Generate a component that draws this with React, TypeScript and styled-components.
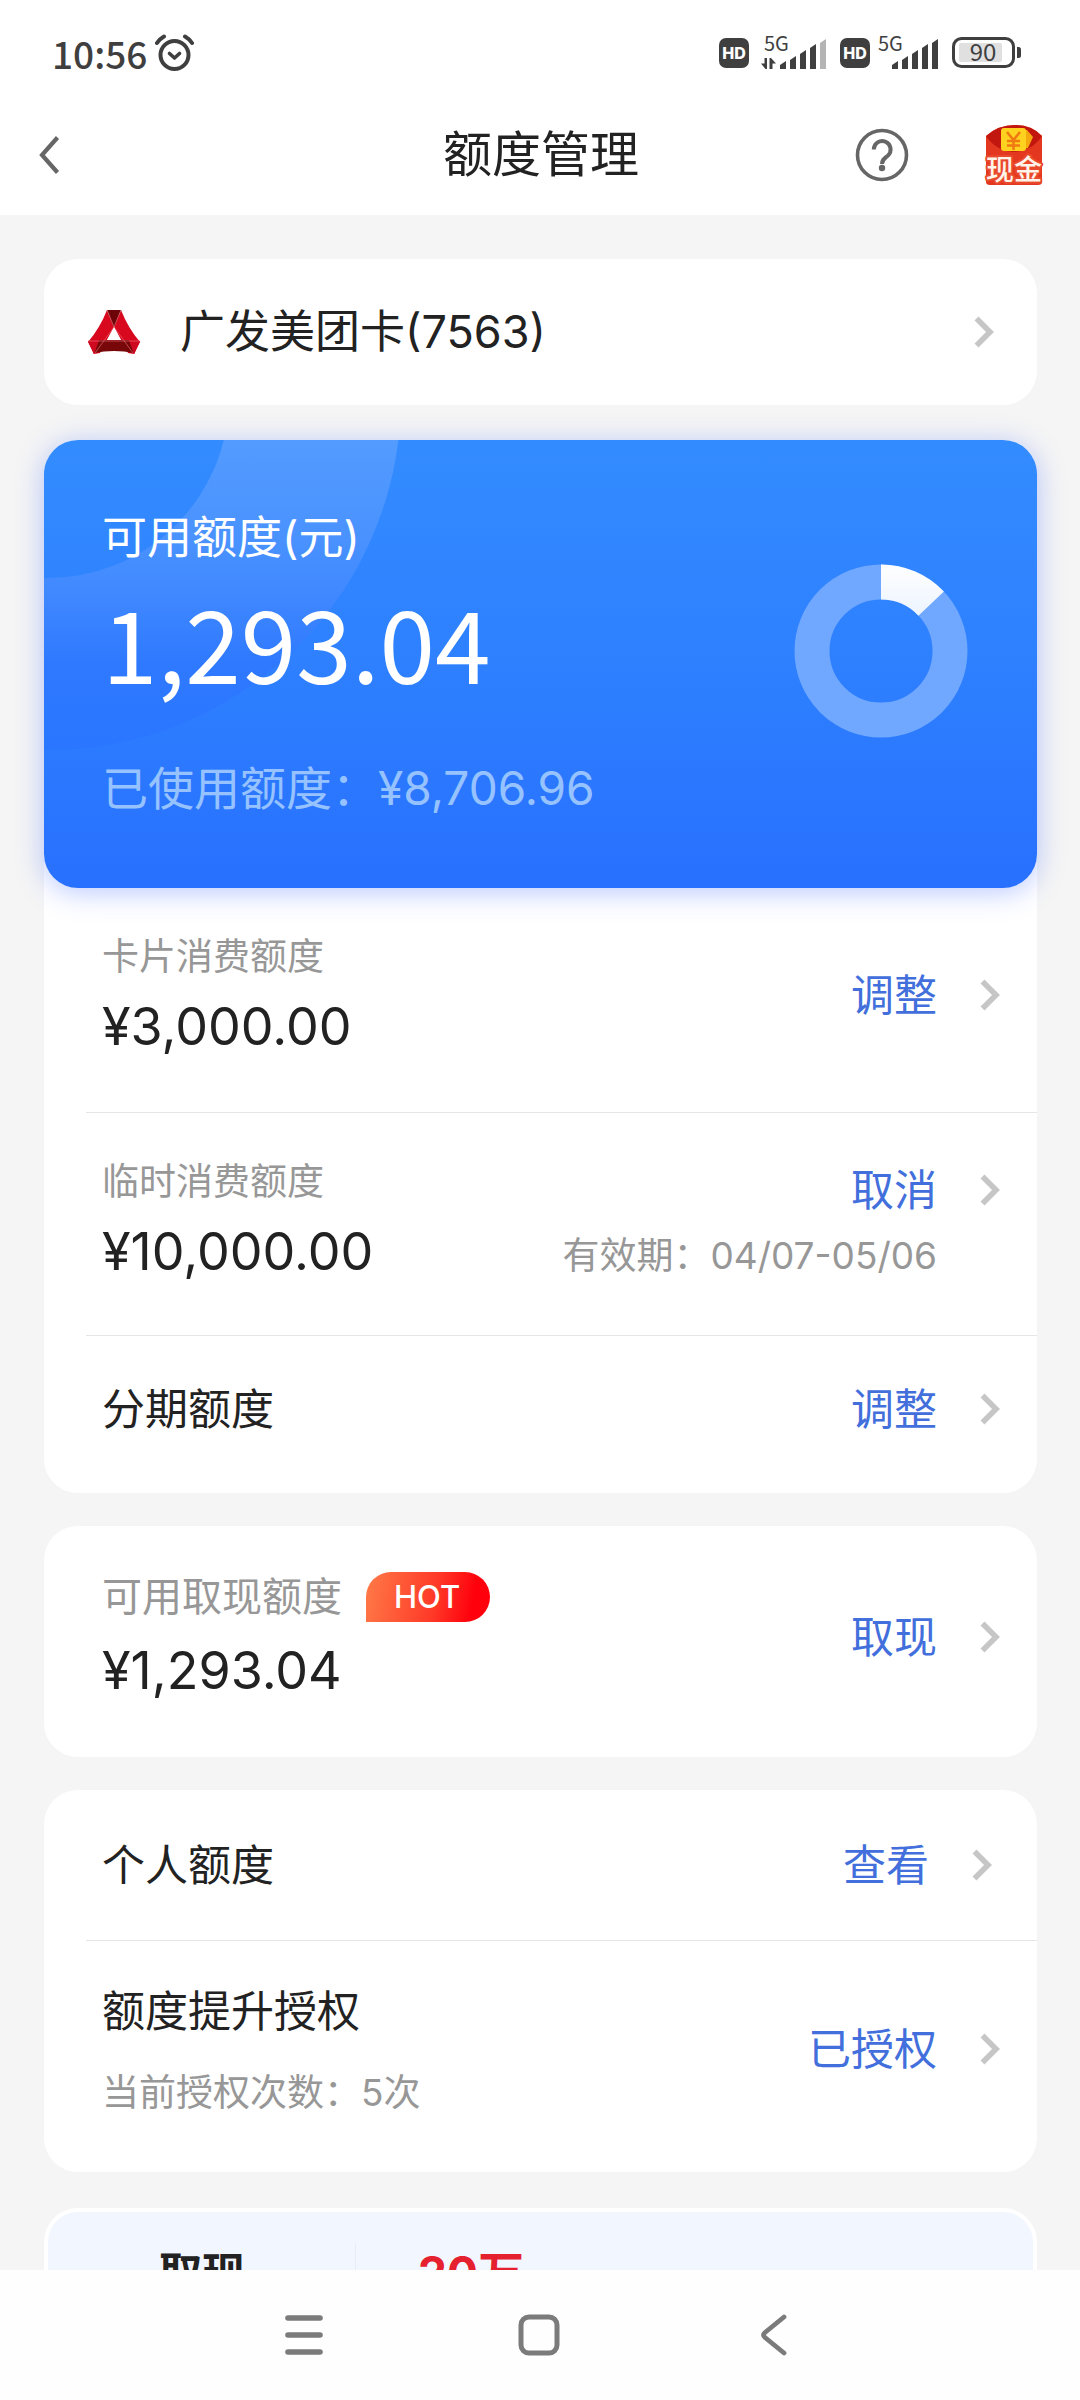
import React from 'react';
import styled, { createGlobalStyle, css } from 'styled-components';

const latinFirst = `Inter, "Noto Sans CJK SC", sans-serif`;
const cjkFirst = `"Noto Sans CJK SC", sans-serif`;

const color = {
  ink: '#222222',
  muted: '#979797',
  status: '#3f3f3f',
  icon: '#666666',
  link: '#426fdc',
  page: '#f5f5f5',
  line: '#e6e6e6',
  chevron: '#c6c6c6',
};

const GlobalStyle = createGlobalStyle`
  *, *::before, *::after { box-sizing: border-box; }
  body { margin: 0; background: #ffffff; font-family: ${latinFirst}; color: ${color.ink}; }
  h1, h2, p, dl, dd, dt { margin: 0; font-weight: 400; }
  svg { display: block; flex: none; }
`;

const Screen = styled.div`
  height: 100vh;
  display: flex;
  flex-direction: column;
  background: #ffffff;
`;

const StatusBar = styled.header`
  flex: none;
  display: flex;
  align-items: center;
  justify-content: space-between;
  padding: 31px 59px 13px 52px;
`;

const StatusGroup = styled.div<{ $gap: number }>`
  display: flex;
  align-items: center;
  gap: ${(p) => p.$gap}px;
`;

const Clock = styled.span`
  font-family: ${cjkFirst};
  font-size: 37px;
  line-height: 44px;
  font-weight: 500;
  color: ${color.status};
`;

const HdBadge = styled.span`
  width: 30px;
  height: 30px;
  border-radius: 7px;
  background: ${color.status};
  color: #ffffff;
  font-size: 16px;
  line-height: 30px;
  font-weight: 800;
  text-align: center;
`;

const TitleBar = styled.nav`
  flex: none;
  display: grid;
  grid-template-columns: 1fr auto 1fr;
  align-items: center;
  padding: 32px 36px 25px 38px;
`;

const Title = styled.h1`
  font-size: 49px;
  line-height: 70px;
`;

const TitleActions = styled.div`
  display: flex;
  align-items: center;
  justify-content: flex-end;
  gap: 75px;
`;

const IconButton = styled.button`
  display: flex;
  justify-self: start;
  padding: 0;
  border: 0;
  background: none;
  cursor: pointer;
`;

const Content = styled.main`
  flex: 1;
  min-height: 0;
  overflow-y: auto;
  scrollbar-width: none;
  padding: 44px 43px 33px 44px;
  background: ${color.page};
`;

const Card = styled.section`
  border-radius: 34px;
  background: #ffffff;
  margin-bottom: 33px;
`;

const CardPicker = styled.button`
  display: flex;
  align-items: center;
  gap: 40px;
  width: 100%;
  margin-bottom: 35px;
  padding: 43px 43px 43px 44px;
  border: 0;
  border-radius: 34px;
  background: #ffffff;
  color: ${color.ink};
  font-family: inherit;
  font-size: 45px;
  line-height: 60px;
  text-align: left;
  cursor: pointer;
`;

const CardName = styled.span`
  flex: 1;
`;

const Summary = styled.div`
  position: relative;
  display: flex;
  justify-content: space-between;
  padding: 68px 69px 70px 58px;
  border-radius: 34px;
  background: linear-gradient(#338cff, #2e80ff 50%, #2870ff);
  box-shadow: 0 4px 28px rgba(50, 95, 255, 0.34);
  color: #ffffff;
`;

const Rings = styled.svg`
  position: absolute;
  left: 0;
  top: 0;
  border-top-left-radius: 34px;
`;

const SummaryText = styled.dl`
  position: relative;
`;

const SummaryLabel = styled.dt`
  font-size: 45px;
  line-height: 60px;
`;

const SummaryAmount = styled.dd`
  margin: 13px 0 57px;
  font-family: ${cjkFirst};
  font-size: 100px;
  line-height: 120px;
`;

const SummaryUsed = styled.dd`
  font-size: 46px;
  line-height: 60px;
  color: #96c3ff;
`;

const DonutBox = styled.div`
  margin-top: 56px;
`;

const Row = styled.div<{ $top: number; $bottom: number; $line?: boolean; $inset?: boolean }>`
  display: flex;
  align-items: center;
  justify-content: space-between;
  margin-left: 42px;
  padding: ${(p) => p.$top}px ${(p) => (p.$inset ? 45 : 37)}px ${(p) => p.$bottom}px 16px;
  ${(p) =>
    p.$line &&
    css`
      border-bottom: 1px solid ${color.line};
    `}
`;

const Stack = styled.div<{ $gap: number }>`
  display: flex;
  flex-direction: column;
  gap: ${(p) => p.$gap}px;
`;

const LabelLine = styled.div`
  display: flex;
  align-items: center;
  gap: 24px;
`;

const Label = styled.p<{ $large?: boolean }>`
  font-size: ${(p) => (p.$large ? 40 : 37)}px;
  line-height: 48px;
  color: ${color.muted};
`;

const Heading = styled.h2`
  font-size: 43px;
  line-height: 60px;
`;

const Amount = styled.p`
  font-size: 52px;
  line-height: 60px;
`;

const HotBadge = styled.span`
  padding: 0 30px 0 28px;
  border-radius: 25px 25px 25px 0;
  background: linear-gradient(100deg, #ff7a48, #ff3a28 55%, #ff000c 85%);
  color: #ffffff;
  font-size: 31px;
  line-height: 50px;
  font-weight: 500;
`;

const Action = styled.button`
  display: flex;
  align-items: center;
  justify-content: flex-end;
  gap: 43px;
  padding: 0;
  border: 0;
  background: none;
  color: ${color.link};
  font-family: inherit;
  font-size: 43px;
  line-height: 60px;
  cursor: pointer;
`;

const Validity = styled(Label)`
  padding-right: 63px;
  text-align: right;
`;

const Promo = styled.section`
  display: flex;
  align-items: center;
  margin-top: 36px;
  padding: 31px 111px;
  border: 4px solid #ffffff;
  border-radius: 34px;
  background: #f2f6ff;
  line-height: 60px;
`;

const PromoName = styled.h2`
  padding-right: 110px;
  border-right: 1px solid #e8ecf4;
  font-size: 43px;
  font-weight: 700;
`;

const PromoValue = styled.p`
  padding-left: 62px;
  font-size: 46px;
  font-weight: 700;
  color: #e5202f;
`;

const SystemNav = styled.nav`
  flex: none;
  display: flex;
  align-items: center;
  justify-content: center;
  gap: 194px;
  height: 130px;
  padding-right: 3px;
  background: #fefefe;
`;

function Chevron() {
  return (
    <svg width="20" height="32" viewBox="0 0 20 32" fill="none" aria-hidden="true">
      <path d="M2.5 2.5 16 16 2.5 29.5" stroke={color.chevron} strokeWidth="5.6" />
    </svg>
  );
}

function AlarmIcon() {
  return (
    <svg width="39" height="38" viewBox="0 0 39 38" fill="none" stroke={color.status} strokeLinecap="round" aria-hidden="true">
      <circle cx="19.5" cy="21" r="14" strokeWidth="4" />
      <path d="M14.5 19.5l5 4.5 5-4.5" strokeWidth="3.6" strokeLinejoin="round" />
      <path d="M2 9Q4.500 5 9 2.500M37 9Q34.500 5 30 2.500" strokeWidth="4" />
    </svg>
  );
}

function Signal({ bars, data }: { bars: number; data?: boolean }) {
  const shift = data ? 19 : 14;
  const tops = [30, 25, 19, 13, 8];
  return (
    <svg width={shift + 48} height="44" viewBox={`0 0 ${shift + 48} 44`} fill={color.status} aria-hidden="true">
      <text x={data ? 3 : 0} y="20" fontSize="20" fontFamily={cjkFirst} fontWeight="400">
        5G
      </text>
      {tops.map((top, i) => {
        const x = shift + i * 10;
        return (
          <path
            key={top}
            d={`M${x} ${top + 4}L${x + 6} ${top}V38H${x}Z`}
            fill={i < bars ? color.status : '#b4b4b4'}
          />
        );
      })}
      {data && <path d="M3.500 27H6V38H4.500L0 32.500H3.500ZM8.500 27H10L15 32.500H11.500V38H8.500Z" />}
    </svg>
  );
}

function Battery() {
  return (
    <svg width="69" height="40" viewBox="0 0 69 40" aria-hidden="true">
      <rect x="1.500" y="5.500" width="60" height="28" rx="8" fill="none" stroke={color.status} strokeWidth="3" />
      <rect x="7" y="10" width="43" height="19" rx="2" fill="#e0e0e0" />
      <path d="M65 14h1.500q2.500 0 2.500 2.500v6q0 2.500-2.500 2.500H65Z" fill={color.status} />
      <text x="31" y="28" textAnchor="middle" fontSize="24" fontFamily={cjkFirst} fontWeight="400" fill={color.status}>
        90
      </text>
    </svg>
  );
}

function BackIcon() {
  return (
    <svg width="22" height="40" viewBox="0 0 22 40" fill="none" aria-hidden="true">
      <path d="M19.500 2.500 4 20l15.500 17.500" stroke={color.icon} strokeWidth="4.200" />
    </svg>
  );
}

function HelpIcon() {
  return (
    <svg width="54" height="54" viewBox="0 0 54 54" fill="none" stroke={color.icon} aria-hidden="true">
      <circle cx="27" cy="27" r="24.500" strokeWidth="3.600" />
      <path d="M18.800 21.500a8.400 8.400 0 1 1 14 6.200c-3.600 3-5.800 4-5.800 8.300" strokeWidth="4" />
      <circle cx="27" cy="40" r="3.200" fill={color.icon} stroke="none" />
    </svg>
  );
}

function CashIcon() {
  return (
    <svg width="60" height="62" viewBox="0 0 60 62" aria-hidden="true">
      <path d="M2 12Q14 1 31 1T58 12V58Q58 61 54 61H6Q2 61 2 58Z" fill="#e3381f" />
      <path d="M2 12Q14 1 31 1T58 12Q48 27 30 28Q12 27 2 12Z" fill="#c1170f" />
      <path d="M34 6h9l6 7-5 11-8 2Z" fill="#f6a90f" />
      <rect x="17" y="4" width="25" height="23" rx="3" fill="#ffd21f" />
      <path d="M23 8l6.500 8L36 8M29.500 16v10M23 17h13M23 21.500h13" stroke="#f07a12" strokeWidth="2.600" fill="none" />
      <text
        x="30"
        y="56"
        textAnchor="middle"
        fontSize="28"
        fontWeight="500"
        fontFamily={cjkFirst}
        fill="#fff3ea"
        stroke="#ea4a2c"
        strokeWidth="4"
        strokeLinejoin="round"
        paintOrder="stroke"
      >
        现金
      </text>
    </svg>
  );
}

function BankLogo() {
  return (
    <svg width="52" height="44" viewBox="0 0 52 44" aria-hidden="true">
      <path d="M19 0 26 17 12 43 6 44 0 32Q12 18 19 0Z" fill="#d8081f" />
      <path d="M33 0 26 17 40 43 46 44 52 32Q40 18 33 0Z" fill="#d8081f" />
      <path d="M19 0H33L26 18Z" fill="#6d0508" />
      <path d="M0 31 12 30 6 44ZM52 31 40 30 46 44Z" fill="#cf0a20" />
      <path d="M11 30H41L46 43Q26 39 6 43Z" fill="#780709" />
      <path d="M0 31 11 30 6 44ZM52 31 41 30 46 44Z" fill="#cf0a20" />
      <path d="M26 17 33 30H19Z" fill="#ffffff" />
      <path d="M0 31H52M26 17 7 43M26 17 45 43M19 0l7 17 7-17" stroke="#f0737c" strokeWidth="0.600" fill="none" />
    </svg>
  );
}

function Donut({ ratio }: { ratio: number }) {
  const circumference = 2 * Math.PI * 69;
  return (
    <svg width="174" height="174" viewBox="0 0 174 174" fill="none" role="img" aria-label="可用额度占比">
      <defs>
        <linearGradient id="share" x1="0" y1="0" x2="0" y2="60" gradientUnits="userSpaceOnUse">
          <stop offset="0" stopColor="#ffffff" />
          <stop offset="1" stopColor="#e9f2ff" />
        </linearGradient>
      </defs>
      <circle cx="87" cy="87" r="69" stroke="#70a7ff" strokeWidth="35" />
      <path
        d="M87 18a69 69 0 0 1 0 138a69 69 0 0 1 0-138"
        stroke="url(#share)"
        strokeWidth="35"
        strokeDasharray={`${circumference * ratio} ${circumference}`}
      />
    </svg>
  );
}

function RingPattern() {
  return (
    <Rings width="360" height="320" viewBox="0 0 360 320" fill="none" aria-hidden="true">
      <defs>
        <linearGradient id="ring" x1="0" y1="0" x2="0" y2="310" gradientUnits="userSpaceOnUse">
          <stop offset="0" stopColor="#539bff" />
          <stop offset="0.300" stopColor="#4a93ff" />
          <stop offset="0.500" stopColor="#4088ff" />
          <stop offset="0.720" stopColor="#2e79ff" />
          <stop offset="1" stopColor="#2a76ff" />
        </linearGradient>
      </defs>
      <circle cx="4" cy="-43" r="267" stroke="url(#ring)" strokeWidth="172" />
    </Rings>
  );
}

function RowAction({ children }: { children: string }) {
  return (
    <Action type="button">
      {children}
      <Chevron />
    </Action>
  );
}

export default function App() {
  return (
    <Screen>
      <GlobalStyle />
      <StatusBar>
        <StatusGroup $gap={8}>
          <Clock>10:56</Clock>
          <AlarmIcon />
        </StatusGroup>
        <StatusGroup $gap={12}>
          <StatusGroup $gap={12}>
            <HdBadge>HD</HdBadge>
            <Signal bars={4} data />
          </StatusGroup>
          <StatusGroup $gap={8}>
            <HdBadge>HD</HdBadge>
            <Signal bars={5} />
          </StatusGroup>
          <Battery />
        </StatusGroup>
      </StatusBar>

      <TitleBar>
        <IconButton type="button" aria-label="返回">
          <BackIcon />
        </IconButton>
        <Title>额度管理</Title>
        <TitleActions>
          <IconButton type="button" aria-label="帮助">
            <HelpIcon />
          </IconButton>
          <IconButton type="button" aria-label="现金">
            <CashIcon />
          </IconButton>
        </TitleActions>
      </TitleBar>

      <Content>
        <CardPicker type="button">
          <BankLogo />
          <CardName>广发美团卡(7563)</CardName>
          <Chevron />
        </CardPicker>

        <Card>
          <Summary>
            <RingPattern />
            <SummaryText>
              <SummaryLabel>可用额度(元)</SummaryLabel>
              <SummaryAmount>1,293.04</SummaryAmount>
              <SummaryUsed>已使用额度：¥8,706.96</SummaryUsed>
            </SummaryText>
            <DonutBox>
              <Donut ratio={1293.04 / 10000} />
            </DonutBox>
          </Summary>
          <Row $top={45} $bottom={55} $line>
            <Stack $gap={16}>
              <Label>卡片消费额度</Label>
              <Amount>¥3,000.00</Amount>
            </Stack>
            <RowAction>调整</RowAction>
          </Row>
          <Row $top={45} $bottom={53} $line>
            <Stack $gap={16}>
              <Label>临时消费额度</Label>
              <Amount>¥10,000.00</Amount>
            </Stack>
            <Stack $gap={12}>
              <RowAction>取消</RowAction>
              <Validity>有效期：04/07-05/06</Validity>
            </Stack>
          </Row>
          <Row $top={43} $bottom={54}>
            <Heading>分期额度</Heading>
            <RowAction>调整</RowAction>
          </Row>
        </Card>

        <Card>
          <Row $top={46} $bottom={56}>
            <Stack $gap={19}>
              <LabelLine>
                <Label $large>可用取现额度</Label>
                <HotBadge>HOT</HotBadge>
              </LabelLine>
              <Amount>¥1,293.04</Amount>
            </Stack>
            <RowAction>取现</RowAction>
          </Row>
        </Card>

        <Card>
          <Row $top={45} $bottom={45} $line $inset>
            <Heading>个人额度</Heading>
            <RowAction>查看</RowAction>
          </Row>
          <Row $top={40} $bottom={55}>
            <Stack $gap={28}>
              <Heading>额度提升授权</Heading>
              <Label>当前授权次数：5次</Label>
            </Stack>
            <RowAction>已授权</RowAction>
          </Row>
        </Card>

        <Promo>
          <PromoName>取现</PromoName>
          <PromoValue>20万</PromoValue>
        </Promo>
      </Content>

      <SystemNav aria-label="系统导航">
        <IconButton type="button" aria-label="最近任务">
          <svg width="40" height="42" viewBox="0 0 40 42" fill="none" stroke="#7b7b7b" strokeWidth="5.600" strokeLinecap="round">
            <path d="M4 4h32M4 21h32M4 38h32" />
          </svg>
        </IconButton>
        <IconButton type="button" aria-label="主屏幕">
          <svg width="42" height="42" viewBox="0 0 42 42" fill="none" stroke="#7b7b7b" strokeWidth="5">
            <rect x="3" y="3" width="36" height="36" rx="8" />
          </svg>
        </IconButton>
        <IconButton type="button" aria-label="返回上一页">
          <svg width="40" height="42" viewBox="0 0 40 42" fill="none" stroke="#7b7b7b" strokeWidth="4.800" strokeLinecap="round">
            <path d="M30 3 11 18.500Q8 21 11 23.500L30 39" />
          </svg>
        </IconButton>
      </SystemNav>
    </Screen>
  );
}
